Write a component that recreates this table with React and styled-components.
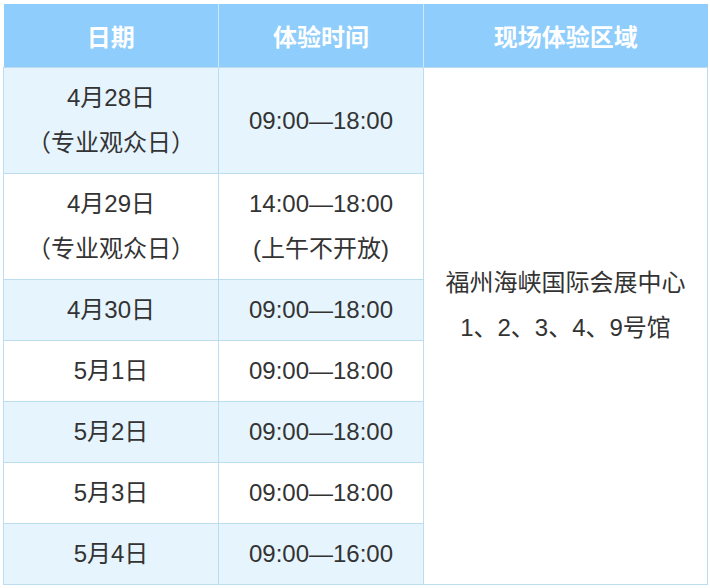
import styled, { createGlobalStyle } from "styled-components";

const GlobalStyle = createGlobalStyle`
    html, body {
        margin: 0;
        padding: 0;
        background: #ffffff;
    }
    body {
        font-family: "Liberation Sans", "Noto Sans CJK SC", sans-serif;
        color: #333333;
    }
`;

const Wrap = styled.div`
    padding: 4px 2px 0 3px;
`;

const Table = styled.table`
    width: 705px;
    border-collapse: collapse;
    table-layout: fixed;
    font-size: 24px;
`;

const HeadCell = styled.th`
    height: 63px;
    padding: 0;
    background: #8ecdfc;
    color: #ffffff;
    font-weight: 700;
    font-family: "Noto Sans CJK SC", sans-serif;
    text-align: center;
    vertical-align: middle;
    border-left: 1px solid #cde8fb;
    border-bottom: 1px solid #bcdcf0;
    &:first-child {
        border-left: none;
    }
`;

const Row = styled.tr`
    background: ${(props) => (props.$shade ? "#e6f4fd" : "#ffffff")};
`;

const Cell = styled.td`
    padding: 7px 4px 8px;
    line-height: 45px;
    text-align: center;
    vertical-align: middle;
    border: 1px solid #bcdcf0;
    color: #333333;
`;

const VenueCell = styled(Cell)`
    background: #ffffff;
    padding: 7px 10px 50px;
`;

const Line = styled.div`
    white-space: nowrap;
`;

const rows = [
    { date: ["4月28日", "（专业观众日）"], time: ["09:00—18:00"] },
    { date: ["4月29日", "（专业观众日）"], time: ["14:00—18:00", "(上午不开放)"] },
    { date: ["4月30日"], time: ["09:00—18:00"] },
    { date: ["5月1日"], time: ["09:00—18:00"] },
    { date: ["5月2日"], time: ["09:00—18:00"] },
    { date: ["5月3日"], time: ["09:00—18:00"] },
    { date: ["5月4日"], time: ["09:00—16:00"] },
];

const App = () => {
    return (
        <Wrap>
            <GlobalStyle />
            <Table>
                <colgroup>
                    <col style={{ width: "215px" }} />
                    <col style={{ width: "205px" }} />
                    <col />
                </colgroup>
                <thead>
                    <tr>
                        <HeadCell>日期</HeadCell>
                        <HeadCell>体验时间</HeadCell>
                        <HeadCell>现场体验区域</HeadCell>
                    </tr>
                </thead>
                <tbody>
                    {rows.map((row, i) => (
                        <Row key={i} $shade={i % 2 === 0}>
                            <Cell>
                                {row.date.map((d) => (
                                    <Line key={d}>{d}</Line>
                                ))}
                            </Cell>
                            <Cell>
                                {row.time.map((t) => (
                                    <Line key={t}>{t}</Line>
                                ))}
                            </Cell>
                            {i === 0 && (
                                <VenueCell rowSpan={rows.length}>
                                    <Line>福州海峡国际会展中心</Line>
                                    <Line>1、2、3、4、9号馆</Line>
                                </VenueCell>
                            )}
                        </Row>
                    ))}
                </tbody>
            </Table>
        </Wrap>
    );
};

export default App;
